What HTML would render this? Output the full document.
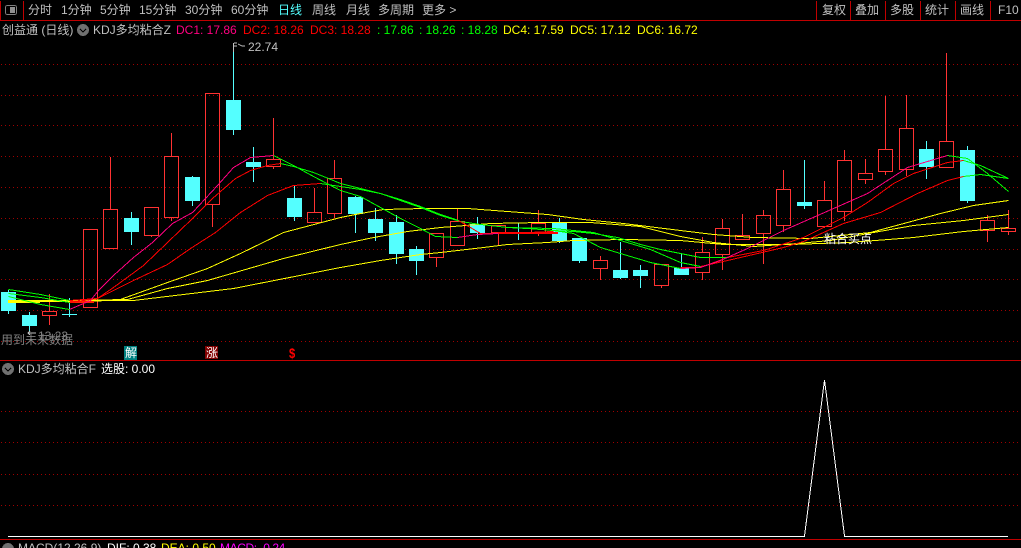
<!DOCTYPE html>
<html><head><meta charset="utf-8"><style>
html,body{margin:0;padding:0;background:#000;width:1021px;height:548px;overflow:hidden}
#w{position:relative;width:1021px;height:548px;overflow:hidden;background:#000;font:12px/14px "Liberation Sans","WenQuanYi Zen Hei","Noto Sans CJK SC",sans-serif;color:#c0c0c0}
#w span{position:absolute;white-space:pre}
svg{position:absolute;left:0;top:0}
.g{color:#c0c0c0}.p{color:#ff0080}.r{color:#ff0000}.n{color:#00ff00}.y{color:#ffff00}
</style></head><body><div id="w">
<svg width="1021" height="548" shape-rendering="crispEdges" fill="none">
<g stroke="#a00000" stroke-dasharray="1 3"><path d="M1 64.5H1021M1 95.5H1021M1 125.5H1021M1 156.5H1021M1 187.5H1021M1 218.5H1021M1 249.5H1021M1 279.5H1021M1 310.5H1021M1 341.5H1021M1 411.5H1021M1 442.5H1021M1 474.5H1021M1 505.5H1021"/></g>
<g fill="#c00000"><rect x="0" y="20" width="1021" height="1"/><rect x="0" y="360" width="1021" height="1"/><rect x="0" y="539" width="1021" height="1"/>
<rect x="0" y="1" width="1" height="19"/><rect x="23" y="1" width="1" height="19"/><rect x="816" y="1" width="1" height="19"/><rect x="850" y="1" width="1" height="19"/><rect x="885" y="1" width="1" height="19"/><rect x="920" y="1" width="1" height="19"/><rect x="955" y="1" width="1" height="19"/><rect x="990" y="1" width="1" height="19"/></g>
<rect x="5.5" y="5.5" width="11" height="9" rx="2" stroke="#808080"/><rect x="10" y="7" width="5" height="6" fill="#909090"/>
<g stroke="#ff3232"><path d="M49.5 294V311M49.5 315V325M42.5 311.5h14v4h-14zM83.5 229.5h14v78h-14zM110.5 157V209M103.5 209.5h14v39h-14zM151.5 235V237M144.5 207.5h14v28h-14zM171.5 133V156M171.5 217V221M164.5 156.5h14v61h-14zM212.5 204V227M205.5 93.5h14v111h-14zM273.5 118V159M273.5 166V169M266.5 159.5h14v7h-14zM314.5 188V212M307.5 212.5h14v10h-14zM334.5 160V178M334.5 213V218M327.5 178.5h14v35h-14zM436.5 257V267M429.5 233.5h14v24h-14zM457.5 208V221M450.5 221.5h14v24h-14zM498.5 232V245M491.5 225.5h14v7h-14zM538.5 210V223M538.5 232V236M531.5 223.5h14v9h-14zM600.5 256V260M600.5 268V280M593.5 260.5h14v8h-14zM661.5 285V288M654.5 264.5h14v21h-14zM702.5 237V252M702.5 272V280M695.5 252.5h14v20h-14zM722.5 219V228M722.5 254V270M715.5 228.5h14v26h-14zM742.5 214V235M735.5 235.5h14v4h-14zM763.5 210V215M763.5 233V264M756.5 215.5h14v18h-14zM783.5 170V189M783.5 225V232M776.5 189.5h14v36h-14zM824.5 181V200M824.5 226V228M817.5 200.5h14v26h-14zM844.5 150V160M844.5 211V221M837.5 160.5h14v51h-14zM865.5 159V173M865.5 179V184M858.5 173.5h14v6h-14zM885.5 96V149M885.5 171V175M878.5 149.5h14v22h-14zM906.5 95V128M906.5 169V176M899.5 128.5h14v41h-14zM946.5 53V141M939.5 141.5h14v26h-14zM987.5 215V220M987.5 230V242M980.5 220.5h14v10h-14zM1008.5 210V228M1008.5 231V235M1001.5 228.5h14v3h-14z"/></g>
<g fill="#54ffff"><rect x="1" y="292" width="15" height="19"/><rect x="8" y="290" width="1" height="24"/><rect x="22" y="315" width="15" height="11"/><rect x="29" y="312" width="1" height="20"/><rect x="62" y="314" width="15" height="1"/><rect x="69" y="298" width="1" height="19"/><rect x="124" y="218" width="15" height="14"/><rect x="131" y="212" width="1" height="33"/><rect x="185" y="177" width="15" height="24"/><rect x="192" y="176" width="1" height="30"/><rect x="226" y="100" width="15" height="30"/><rect x="233" y="43" width="1" height="92"/><rect x="246" y="162" width="15" height="5"/><rect x="253" y="147" width="1" height="35"/><rect x="287" y="198" width="15" height="19"/><rect x="294" y="185" width="1" height="36"/><rect x="348" y="197" width="15" height="17"/><rect x="355" y="196" width="1" height="37"/><rect x="368" y="219" width="15" height="14"/><rect x="375" y="208" width="1" height="33"/><rect x="389" y="222" width="15" height="32"/><rect x="396" y="215" width="1" height="49"/><rect x="409" y="249" width="15" height="12"/><rect x="416" y="246" width="1" height="29"/><rect x="470" y="224" width="15" height="9"/><rect x="477" y="217" width="1" height="22"/><rect x="511" y="232" width="15" height="2"/><rect x="518" y="223" width="1" height="17"/><rect x="552" y="223" width="15" height="18"/><rect x="559" y="218" width="1" height="25"/><rect x="572" y="238" width="15" height="23"/><rect x="579" y="238" width="1" height="25"/><rect x="613" y="270" width="15" height="8"/><rect x="620" y="242" width="1" height="37"/><rect x="633" y="270" width="15" height="6"/><rect x="640" y="265" width="1" height="23"/><rect x="674" y="268" width="15" height="7"/><rect x="681" y="253" width="1" height="22"/><rect x="797" y="202" width="15" height="4"/><rect x="804" y="160" width="1" height="49"/><rect x="919" y="149" width="15" height="18"/><rect x="926" y="141" width="1" height="38"/><rect x="960" y="150" width="15" height="51"/><rect x="967" y="146" width="1" height="57"/></g>
<g stroke="#ffff00" transform="translate(.5 .5)"><polyline points="8,301 117,300 167,282 207,268 240,253 283,232 340,217 360,213 383,209 423,208 467,208 507,211 547,214 583,219 623,223 680,230 713,234 753,237 810,238 870,232 907,222 940,213 973,205 1008,200"/><polyline points="8,301 127,299 167,288 207,280 283,258 340,244 373,237 407,231 440,227 490,223 540,222 590,222 640,226 680,236 713,242 753,246 797,243 830,240 873,232 913,225 963,220 1008,214"/><polyline points="8,301 133,300 233,288 340,267 380,260 420,254 440,252 483,247 507,244 547,242 573,240 623,239 680,240 723,244 790,244 847,242 875,240 913,237 963,231 1008,227"/></g>
<rect x="8" y="300" width="32" height="3" fill="#ffff00"/><rect x="40" y="300" width="30" height="2" fill="#ffff00"/><rect x="70" y="301" width="24" height="2" fill="#ff2000"/>
<g stroke="#00ff00" transform="translate(.5 .5)"><polyline points="8,296 40,304 69,309"/><polyline points="8,293 40,297 69,302"/><polyline points="8,289 40,294 69,300"/>
<polyline points="273,155 293,165 313,176 340,190 360,196 380,207 400,218 420,228 435,236 457,237"/><polyline points="280,163 293,166 313,172 328,178 340,183 360,188 380,193 400,200 420,207 440,215 460,221 480,224 507,227 527,228 553,230 573,231 593,233 617,237 640,244 660,249 680,253 700,257 727,257"/><polyline points="320,183 340,186 360,189 380,193 400,199 420,206 440,214 458,220"/><polyline points="505,227 553,228 593,232 620,240 650,249 680,262 700,266"/><polyline points="553,230 573,233 600,247 620,253 650,262 680,268"/>
<polyline points="947,155 967,158 987,173 1008,191"/><polyline points="963,160 980,165 1008,178"/><polyline points="963,176 980,174 1008,178"/></g>
<g stroke="#ff0000" transform="translate(.5 .5)"><polyline points="69,302 97,298 113,287 143,265 167,242 192,218 212,198 235,178 250,170 267,165 280,163"/><polyline points="69,300 97,298 133,280 167,264 190,248 215,232 240,212 267,195 293,185 320,183"/><polyline points="458,220 480,233 528,232 553,231"/><polyline points="680,267 700,267 727,257 763,250 803,237 843,217 867,202 893,183 913,173 947,162 963,160"/><polyline points="700,266 727,260 783,247 803,241 843,223 880,212 917,193 947,180 963,176"/></g>
<rect x="498" y="232" width="60" height="2" fill="#ff0000"/>
<g stroke="#ff0080" transform="translate(.5 .5)"><polyline points="69,309 90,300 98,290 113,275 133,257 152,242 172,223 192,212 205,198 217,185 233,167 250,157 273,155"/><polyline points="457,237 477,234 498,233"/><polyline points="680,268 700,267 720,260 747,248 783,230 824,212 867,193 907,167 947,155"/></g>
<rect x="8" y="536" width="797" height="1" fill="#fff"/><rect x="844" y="536" width="164" height="1" fill="#fff"/>
<polyline points="804,536 824,380 844,536" stroke="#fff" transform="translate(.5 0)"/>
<path d="M233.5 43V52M234 43h3M234 46h3M238 44l4 2h3" stroke="#c0c0c0"/>
<path d="M30 331l-2 2 2 2M28 333h8" stroke="#c0c0c0"/>
<rect x="124" y="346" width="13" height="14" fill="#008080"/><rect x="205" y="346" width="13" height="13" fill="#800000"/>
<circle cx="83" cy="30" r="6" fill="#707070"/><path d="M80 29l3 3 3-3" stroke="#000"/>
<circle cx="8" cy="369" r="6" fill="#707070"/><path d="M5 368l3 3 3-3" stroke="#000"/>
<circle cx="8" cy="549" r="6" fill="#707070"/>
</svg>
<span style="left:28px;top:3px">分时</span><span style="left:61px;top:3px">1分钟</span><span style="left:100px;top:3px">5分钟</span><span style="left:139px;top:3px">15分钟</span><span style="left:185px;top:3px">30分钟</span><span style="left:231px;top:3px">60分钟</span><span style="left:278px;top:3px;color:#54ffff">日线</span><span style="left:312px;top:3px">周线</span><span style="left:346px;top:3px">月线</span><span style="left:378px;top:3px">多周期</span><span style="left:422px;top:3px">更多 &gt;</span>
<span style="left:822px;top:3px">复权</span><span style="left:855px;top:3px">叠加</span><span style="left:890px;top:3px">多股</span><span style="left:925px;top:3px">统计</span><span style="left:960px;top:3px">画线</span><span style="left:998px;top:3px">F10</span>
<span style="left:2px;top:23px">创益通 (日线)</span><span style="left:93px;top:23px">KDJ多均粘合Z</span><span class="p" style="left:176px;top:23px">DC1: 17.86</span><span class="r" style="left:243px;top:23px">DC2: 18.26</span><span class="r" style="left:310px;top:23px">DC3: 18.28</span><span class="n" style="left:377px;top:23px">: 17.86</span><span class="n" style="left:419px;top:23px">: 18.26</span><span class="n" style="left:461px;top:23px">: 18.28</span><span class="y" style="left:503px;top:23px">DC4: 17.59</span><span class="y" style="left:570px;top:23px">DC5: 17.12</span><span class="y" style="left:637px;top:23px">DC6: 16.72</span>
<span style="left:248px;top:40px">22.74</span><span style="left:38px;top:329px;color:#808080">13.23</span><span style="left:1px;top:333px;color:#808080">用到未来数据</span>
<span style="left:125px;top:346px;color:#fff">解</span><span style="left:206px;top:346px;color:#fff">涨</span><span style="left:289px;top:346px;color:#ff0000;font-weight:bold;font-size:14px;transform:scale(.8,1);transform-origin:left top">$</span>
<span style="left:824px;top:232px;color:#fff">粘合买点</span>
<span style="left:18px;top:362px">KDJ多均粘合F</span><span style="left:101px;top:362px;color:#fff">选股: 0.00</span>
<span style="left:18px;top:541px">MACD(12,26,9)</span><span style="left:107px;top:541px;color:#fff">DIF: 0.38</span><span style="left:161px;top:541px;color:#ffff00">DEA: 0.50</span><span style="left:220px;top:541px;color:#ff00ff;letter-spacing:-.4px">MACD: -0.24</span>
</div></body></html>
